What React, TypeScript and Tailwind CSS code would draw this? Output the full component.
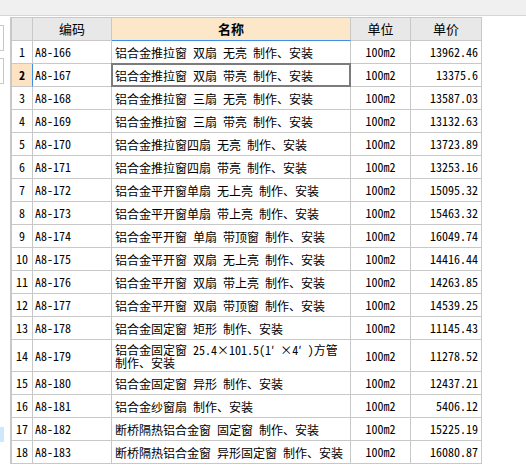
import React from "react";

type Row = { n: number; code: string; name: string; unit: string; price: string; tall?: boolean };

const rows: Row[] = [
  { n: 1, code: "A8-166", name: "铝合金推拉窗 双扇 无亮 制作、安装", unit: "100m2", price: "13962.46" },
  { n: 2, code: "A8-167", name: "铝合金推拉窗 双扇 带亮 制作、安装", unit: "100m2", price: "13375.6" },
  { n: 3, code: "A8-168", name: "铝合金推拉窗 三扇 无亮 制作、安装", unit: "100m2", price: "13587.03" },
  { n: 4, code: "A8-169", name: "铝合金推拉窗 三扇 带亮 制作、安装", unit: "100m2", price: "13132.63" },
  { n: 5, code: "A8-170", name: "铝合金推拉窗四扇 无亮 制作、安装", unit: "100m2", price: "13723.89" },
  { n: 6, code: "A8-171", name: "铝合金推拉窗四扇 带亮 制作、安装", unit: "100m2", price: "13253.16" },
  { n: 7, code: "A8-172", name: "铝合金平开窗单扇 无上亮 制作、安装", unit: "100m2", price: "15095.32" },
  { n: 8, code: "A8-173", name: "铝合金平开窗单扇 带上亮 制作、安装", unit: "100m2", price: "15463.32" },
  { n: 9, code: "A8-174", name: "铝合金平开窗 单扇 带顶窗 制作、安装", unit: "100m2", price: "16049.74" },
  { n: 10, code: "A8-175", name: "铝合金平开窗 双扇 无上亮 制作、安装", unit: "100m2", price: "14416.44" },
  { n: 11, code: "A8-176", name: "铝合金平开窗 双扇 带上亮 制作、安装", unit: "100m2", price: "14263.85" },
  { n: 12, code: "A8-177", name: "铝合金平开窗 双扇 带顶窗 制作、安装", unit: "100m2", price: "14539.25" },
  { n: 13, code: "A8-178", name: "铝合金固定窗 矩形 制作、安装", unit: "100m2", price: "11145.43" },
  { n: 14, code: "A8-179", name: "铝合金固定窗 25.4×101.5(1′ ×4′ )方管 制作、安装", unit: "100m2", price: "11278.52", tall: true },
  { n: 15, code: "A8-180", name: "铝合金固定窗 异形 制作、安装", unit: "100m2", price: "12437.21" },
  { n: 16, code: "A8-181", name: "铝合金纱窗扇 制作、安装", unit: "100m2", price: "5406.12" },
  { n: 17, code: "A8-182", name: "断桥隔热铝合金窗 固定窗 制作、安装", unit: "100m2", price: "15225.19" },
  { n: 18, code: "A8-183", name: "断桥隔热铝合金窗 异形固定窗 制作、安装", unit: "100m2", price: "16080.87" },
];

export default function App() {
  return (
    <div className="w-[526px] h-[468px] bg-white overflow-hidden text-[12px] text-black font-['Noto_Sans_Mono_CJK_SC','Noto_Sans_CJK_SC','Liberation_Mono',monospace]">
      <div className="h-[16px] bg-[#f0f0f0] border-b border-[#d6d6d6]" />
      <div className="flex">
        <div className="w-[10px] shrink-0 flex flex-col">
          <div className="mt-[9px] h-[26px] w-[4px] bg-white border border-l-0 border-[#c8c8c8]" />
          <div className="mt-[7px] h-[26px] w-[4px] bg-white border border-l-0 border-[#c8c8c8]" />
          <div className="mt-[343px] h-[15px] w-[4px] bg-[#cce8fc]" />
        </div>
        <div className="mt-[1px] w-[472px] shrink-0 border-l-2 border-t border-[#c8c8c8] flex flex-col">
          {/* header */}
          <div className="flex h-[23px] text-[13px]">
            <div className="w-[21px] bg-[#e8e8e8] border-r border-b border-[#c8c8c8]" />
            <div className="w-[79px] bg-[#e8e8e8] border-r border-b border-[#c8c8c8] flex items-center justify-center">编码</div>
            <div className="w-[239px] bg-[#fde7c9] border-r border-[#c8c8c8] border-b border-b-[#3d8ee8] flex items-center justify-center font-bold">名称</div>
            <div className="w-[60px] bg-[#e8e8e8] border-r border-b border-[#c8c8c8] flex items-center justify-center">单位</div>
            <div className="w-[71px] bg-[#e8e8e8] border-r border-b border-[#c8c8c8] flex items-center justify-center">单价</div>
          </div>
          {rows.map((r) => {
            const sel = r.n === 2;
            return (
              <div key={r.n} className={`flex ${r.tall ? "h-[32px]" : "h-[23px]"}`}>
                <div
                  className={`w-[21px] border-r border-b border-[#c8c8c8] flex items-center justify-center ${
                    sel ? "bg-[#fde3c4] font-bold border-r-[#3d8ee8]" : "bg-white"
                  }`}
                >
                  {r.n}
                </div>
                <div className="w-[79px] border-r border-b border-[#c8c8c8] flex items-center pl-[2px]">{r.code}</div>
                <div className="relative w-[239px] border-r border-b border-[#c8c8c8] flex items-center pl-[3px] pr-[2px] leading-[13px]">
                  <span>{r.name}</span>
                  {sel && <div className="absolute -top-[1px] -left-[1px] -right-[1px] -bottom-[1px] border-2 border-[#7c7c7c]" />}
                </div>
                <div className="w-[60px] border-r border-b border-[#c8c8c8] flex items-center justify-center">{r.unit}</div>
                <div className="w-[71px] border-r border-b border-[#c8c8c8] flex items-center justify-end pr-[3px]">{r.price}</div>
              </div>
            );
          })}
        </div>
      </div>
    </div>
  );
}
